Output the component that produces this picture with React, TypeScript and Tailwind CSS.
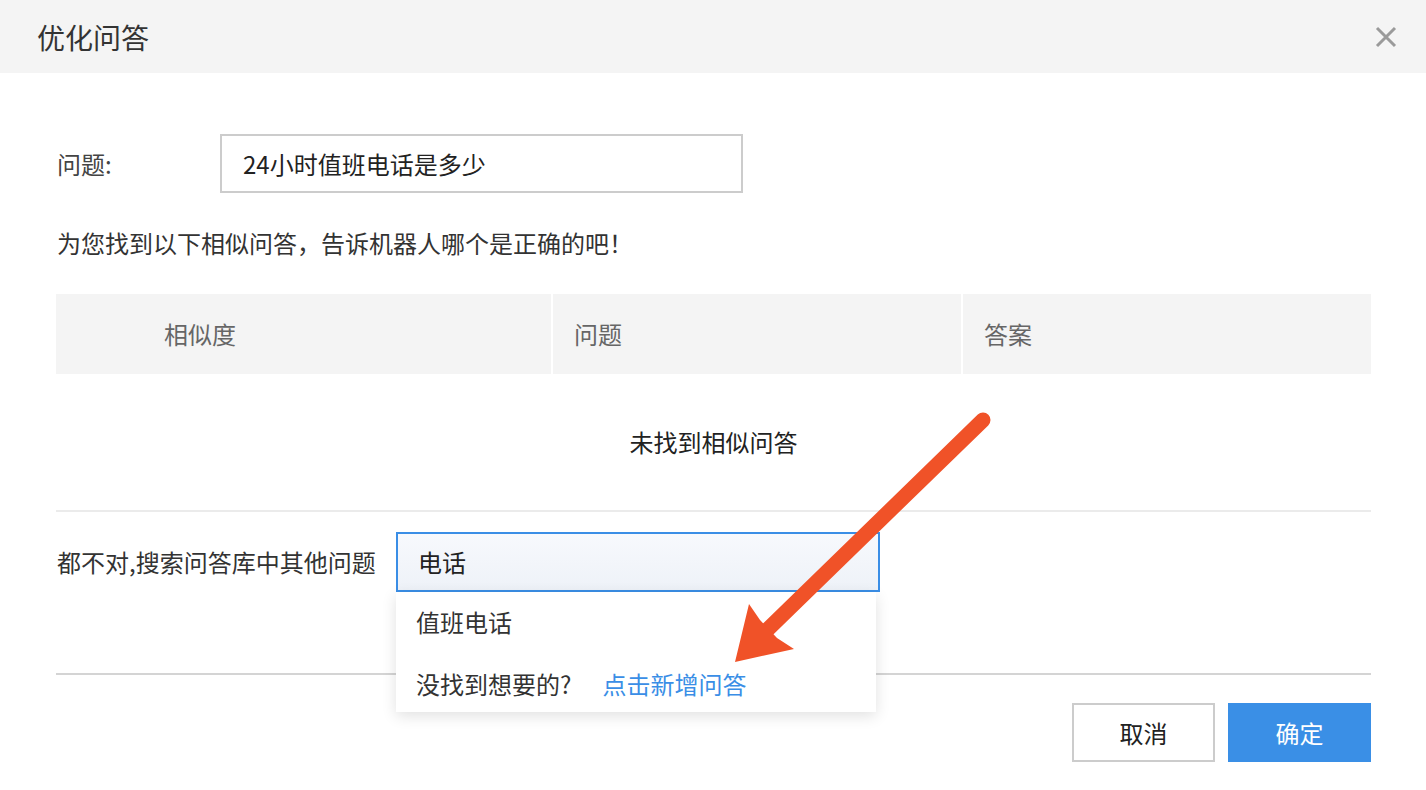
import React from "react";

const font = '"Noto Sans CJK SC", "Noto Sans", sans-serif';

function CloseIcon() {
  return (
    <svg width="22" height="22" viewBox="0 0 22 22" className="text-[#9a9a9a]">
      <path d="M2 2 L20 20 M20 2 L2 20" stroke="currentColor" strokeWidth="3" />
    </svg>
  );
}

// annotation arrow drawn over the dialog
function Arrow() {
  return (
    <svg
      width="1426"
      height="790"
      viewBox="0 0 1426 790"
      className="pointer-events-none absolute left-0 top-0 z-20"
    >
      <line
        x1="983"
        y1="420"
        x2="766"
        y2="631"
        stroke="#f05228"
        strokeWidth="15"
        strokeLinecap="round"
      />
      <polygon points="735,662 749,604 760,620 777,638 794,649" fill="#f05228" />
    </svg>
  );
}

export default function App() {
  return (
    <div
      className="relative h-[790px] w-[1426px] overflow-hidden bg-white text-[#333]"
      style={{ fontFamily: font }}
    >
      {/* header */}
      <div className="flex h-[73px] items-center justify-between bg-[#f4f4f4] pl-[37px] pr-[29px]">
        <span className="text-[28px] leading-none text-[#333]">优化问答</span>
        <CloseIcon />
      </div>

      <div className="pl-[56px] pr-[55px]">
        {/* question */}
        <div className="mt-[61px] flex items-center">
          <span className="w-[164px] pl-px text-[24px] text-[#444]">问题:</span>
          <div className="flex h-[59px] w-[523px] items-center border-2 border-[#cccccc] px-[21px] text-[24px] text-[#222]">
            24小时值班电话是多少
          </div>
        </div>

        <p className="mt-[34px] pl-px text-[24px] leading-[32px] text-[#333]">
          为您找到以下相似问答，告诉机器人哪个是正确的吧！
        </p>

        {/* table */}
        <div className="mt-[35px]">
          <div className="flex h-[80px] gap-[2px] text-[24px] text-[#666]">
            <div className="flex w-[495px] items-center bg-[#f4f4f4] pl-[108px]">相似度</div>
            <div className="flex w-[408px] items-center bg-[#f4f4f4] pl-[21px]">问题</div>
            <div className="flex w-[408px] items-center bg-[#f4f4f4] pl-[21px]">答案</div>
          </div>
          <div className="flex h-[138px] items-center justify-center border-b-2 border-[#ebebeb] text-[24px] text-[#222]">
            未找到相似问答
          </div>
        </div>

        {/* search */}
        <div className="mt-[20px] flex items-center">
          <span className="w-[340px] pl-px text-[24px] text-[#333]">都不对,搜索问答库中其他问题</span>
          <div className="relative">
            <div className="flex h-[60px] w-[484px] items-center border-2 border-[#3a8ee6] bg-gradient-to-b from-[#f7f9fd] to-[#eef2f8] px-[20px] text-[24px] text-[#222]">
              电话
            </div>
            <div className="absolute left-0 top-full z-10 w-[480px] bg-white shadow-[0_4px_14px_rgba(0,0,0,0.12)]">
              <div className="flex h-[60px] items-center px-[20px] text-[24px] text-[#333]">值班电话</div>
              <div className="flex h-[60px] items-center px-[20px] pt-[4px] text-[24px] text-[#333]">
                没找到想要的?
                <span className="ml-[31px] text-[#3a8ee6]">点击新增问答</span>
              </div>
            </div>
          </div>
        </div>

        <div className="mt-[81px] h-[2px] bg-[#d4d4d4]" />

        {/* footer buttons */}
        <div className="mt-[28px] flex justify-end gap-[13px]">
          <button className="flex h-[59px] w-[143px] items-center justify-center border-2 border-[#cccccc] bg-white text-[24px] text-[#222]">
            取消
          </button>
          <button className="flex h-[59px] w-[143px] items-center justify-center bg-[#3a8fe6] text-[24px] text-white">
            确定
          </button>
        </div>
      </div>

      <Arrow />
    </div>
  );
}
